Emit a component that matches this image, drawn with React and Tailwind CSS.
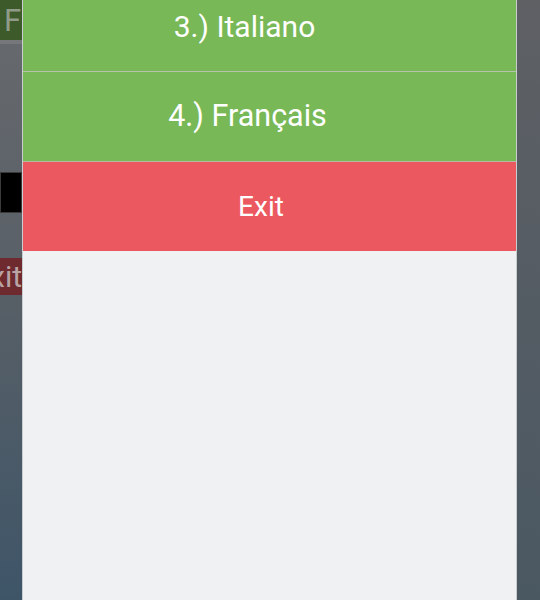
import React from "react";

export default function App() {
  const row = "flex h-[89px] items-center justify-center text-white leading-none";
  return (
    <div
      className="flex h-[600px] w-[540px] overflow-hidden bg-gradient-to-b from-[#686a6e] via-[#575f66] to-[#3e5568]"
      style={{ fontFamily: "Roboto, 'Noto Sans', sans-serif" }}
    >
      {/* underlying page, dimmed */}
      <div className="flex w-[22px] shrink-0 flex-col">
        <div className="flex h-[40px] items-center overflow-hidden bg-[#3d5a2b] text-[31px] leading-none text-[#8f9a88]">
          <span className="ml-[4px]">F</span>
        </div>
        <div className="h-[4px] bg-[#75777b]" />
        <div className="mt-[128px] h-[41px] border border-[#3a3a3a] bg-black" />
        <div className="mt-[45px] flex h-[37px] items-center justify-end overflow-hidden bg-[#6e2a2e] text-[30px] leading-none text-[#b9a3a5]">
          <span className="whitespace-nowrap">xit</span>
        </div>
      </div>

      {/* dialog */}
      <div className="flex w-[495px] shrink-0 flex-col border-x border-[#c9cdd0] bg-[#eff1f3]">
        <div className="-mt-[18px] flex flex-col">
          <div className={`${row} bg-[#78b857] pr-[50px] text-[30px]`}>3.) Italiano</div>
          <div className="h-px bg-[#b4c3aa]" />
          <div className={`${row} bg-[#78b857] pr-[44px] text-[30.5px]`}>4.) Français</div>
          <div className="h-px bg-[#b9b6a4]" />
          <div className={`${row} bg-[#ec5860] pr-[17px] text-[28px]`}>Exit</div>
        </div>
      </div>

      <div className="flex-1 bg-gradient-to-b from-[#5e6064] to-[#4a5862]" />
    </div>
  );
}
